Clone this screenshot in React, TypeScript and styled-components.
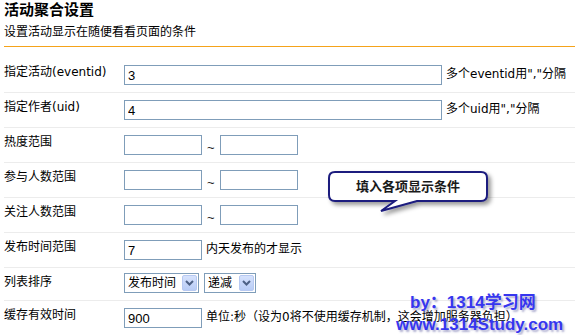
import styled, { createGlobalStyle } from "styled-components";

const GlobalStyle = createGlobalStyle`
  body {
    margin: 0;
    background: #ffffff;
    font-family: "DejaVu Sans", "Noto Sans CJK SC", sans-serif;
    font-size: 12px;
    color: #000000;
  }
`;

const App = () => {
  return (
    <>
      <GlobalStyle />
      <Page>
        {/* 标题 */}
        <Header>
          <Title>活动聚合设置</Title>
          <Subtitle>设置活动显示在随便看看页面的条件</Subtitle>
        </Header>

        {/* 表单 */}
        <Form>
          <Row>
            <Label>指定活动(eventid)</Label>
            <Field>
              <TextInput $w={318} defaultValue="3" />
              <Hint>多个eventid用","分隔</Hint>
            </Field>
          </Row>
          <Row>
            <Label>指定作者(uid)</Label>
            <Field>
              <TextInput $w={318} defaultValue="4" />
              <Hint>多个uid用","分隔</Hint>
            </Field>
          </Row>
          <Row>
            <Label>热度范围</Label>
            <Field>
              <TextInput $w={78} />
              <Tilde>~</Tilde>
              <TextInput $w={78} />
            </Field>
          </Row>
          <Row>
            <Label>参与人数范围</Label>
            <Field>
              <TextInput $w={78} />
              <Tilde>~</Tilde>
              <TextInput $w={78} />
            </Field>
          </Row>
          <Row>
            <Label>关注人数范围</Label>
            <Field>
              <TextInput $w={78} />
              <Tilde>~</Tilde>
              <TextInput $w={78} />
            </Field>
          </Row>
          <Row>
            <Label>发布时间范围</Label>
            <Field>
              <TextInput $w={78} defaultValue="7" />
              <Hint>内天发布的才显示</Hint>
            </Field>
          </Row>
          <Row>
            <Label>列表排序</Label>
            <Field $top={5}>
              <Select $w={75}>
                <span>发布时间</span>
                <SelectArrow>
                  <svg width="9" height="6" viewBox="0 0 9 6">
                    <path d="M1 1 L4.5 4.5 L8 1" fill="none" stroke="#4d6185" strokeWidth="2" />
                  </svg>
                </SelectArrow>
              </Select>
              <Select $w={52}>
                <span>递减</span>
                <SelectArrow>
                  <svg width="9" height="6" viewBox="0 0 9 6">
                    <path d="M1 1 L4.5 4.5 L8 1" fill="none" stroke="#4d6185" strokeWidth="2" />
                  </svg>
                </SelectArrow>
              </Select>
            </Field>
          </Row>
          <Row>
            <Label>缓存有效时间</Label>
            <Field>
              <TextInput $w={78} defaultValue="900" />
              <Hint>单位:秒（设为0将不使用缓存机制，这会增加服务器负担）</Hint>
            </Field>
          </Row>
        </Form>

        {/* 提示气泡 */}
        <Bubble>
          <BubbleShape width="172" height="52" viewBox="-4 -4 172 52">
            <defs>
              <filter id="bubbleShadow" x="-20%" y="-40%" width="140%" height="180%">
                <feDropShadow dx="3" dy="3" stdDeviation="2" floodColor="#000" floodOpacity="0.4" />
              </filter>
            </defs>
            <path
              d="M6 0 H152 Q158 0 158 6 V23 Q158 29 152 29 H88 L52 39 L66 29 H6 Q0 29 0 23 V6 Q0 0 6 0 Z"
              fill="#ffffff"
              stroke="#1c1c7e"
              strokeWidth="2"
              filter="url(#bubbleShadow)"
            />
          </BubbleShape>
          <BubbleText>填入各项显示条件</BubbleText>
        </Bubble>

        {/* 水印 */}
        <Watermark>
          <WatermarkLine $indent={14}>by：1314学习网</WatermarkLine>
          <WatermarkLine>www.1314Study.com</WatermarkLine>
        </Watermark>
      </Page>
    </>
  );
};

export default App;

const Page = styled.div`
  position: relative;
  width: 575px;
  height: 335px;
  overflow: hidden;
  padding-left: 4px;
  box-sizing: border-box;
`;

////////// Header
const Header = styled.div`
  padding-bottom: 5px;
  border-bottom: 1px solid #f5a31a;
`;

const Title = styled.h2`
  margin: 0;
  font-size: 15px;
  font-weight: bold;
  line-height: 20px;
`;

const Subtitle = styled.div`
  margin-top: 3px;
  line-height: 18px;
`;
////////// END

////////// Form
const Form = styled.div`
  margin-top: 11px;
`;

const Row = styled.div`
  display: flex;
  border-bottom: 1px solid #ececec;
`;

const Label = styled.div`
  width: 120px;
  flex: none;
  padding-top: 5px;
  line-height: 18px;
  white-space: nowrap;
`;

const Field = styled.div<{ $top?: number }>`
  display: flex;
  align-items: center;
  padding: ${({ $top }) => $top ?? 7}px 0 7px;
`;

const TextInput = styled.input<{ $w: number }>`
  width: ${({ $w }) => $w}px;
  height: 20px;
  box-sizing: border-box;
  border: 1px solid #7f9db9;
  padding: 0 3px;
  margin: 0;
  font-family: "Liberation Sans", "Noto Sans CJK SC", sans-serif;
  font-size: 13px;
  color: #000;
  background: #fff;
  outline: none;
`;

const Tilde = styled.span`
  align-self: flex-end;
  margin: 0 5px 1px;
  font-family: "Liberation Sans", sans-serif;
  font-size: 13px;
  line-height: 13px;
  color: #222;
`;

const Hint = styled.span`
  margin: 0 0 2px 4px;
  line-height: 18px;
  white-space: nowrap;
`;

const Select = styled.div<{ $w: number }>`
  width: ${({ $w }) => $w}px;
  height: 20px;
  box-sizing: border-box;
  border: 1px solid #7f9db9;
  margin-right: 5px;
  padding: 0 1px 0 3px;
  display: flex;
  align-items: center;
  justify-content: space-between;
  line-height: 18px;
  background: #fff;
`;

const SelectArrow = styled.div`
  width: 15px;
  height: 16px;
  box-sizing: border-box;
  border: 1px solid #b7c9f2;
  border-radius: 2px;
  background: linear-gradient(#d6e2fd, #b8ccf6);
  display: flex;
  align-items: center;
  justify-content: center;
`;
////////// END

////////// Overlay
const Bubble = styled.div`
  position: absolute;
  left: 329px;
  top: 172px;
  width: 158px;
  height: 29px;
  display: flex;
  align-items: center;
  justify-content: center;
`;

const BubbleShape = styled.svg`
  position: absolute;
  left: -4px;
  top: -4px;
  overflow: visible;
`;

const BubbleText = styled.span`
  position: relative;
  font-size: 13px;
  font-weight: bold;
  color: #1a1a1a;
  line-height: 18px;
`;

const Watermark = styled.div`
  position: absolute;
  left: 396px;
  top: 292px;
  font-family: "Liberation Sans", "Noto Sans CJK SC", sans-serif;
  font-size: 17px;
  font-weight: bold;
  line-height: 22px;
  color: #3636ef;
  text-shadow: 2px 2px 2px rgba(110, 110, 170, 0.55);
  white-space: nowrap;
`;

const WatermarkLine = styled.div<{ $indent?: number }>`
  padding-left: ${({ $indent }) => $indent ?? 0}px;
`;
////////// END
